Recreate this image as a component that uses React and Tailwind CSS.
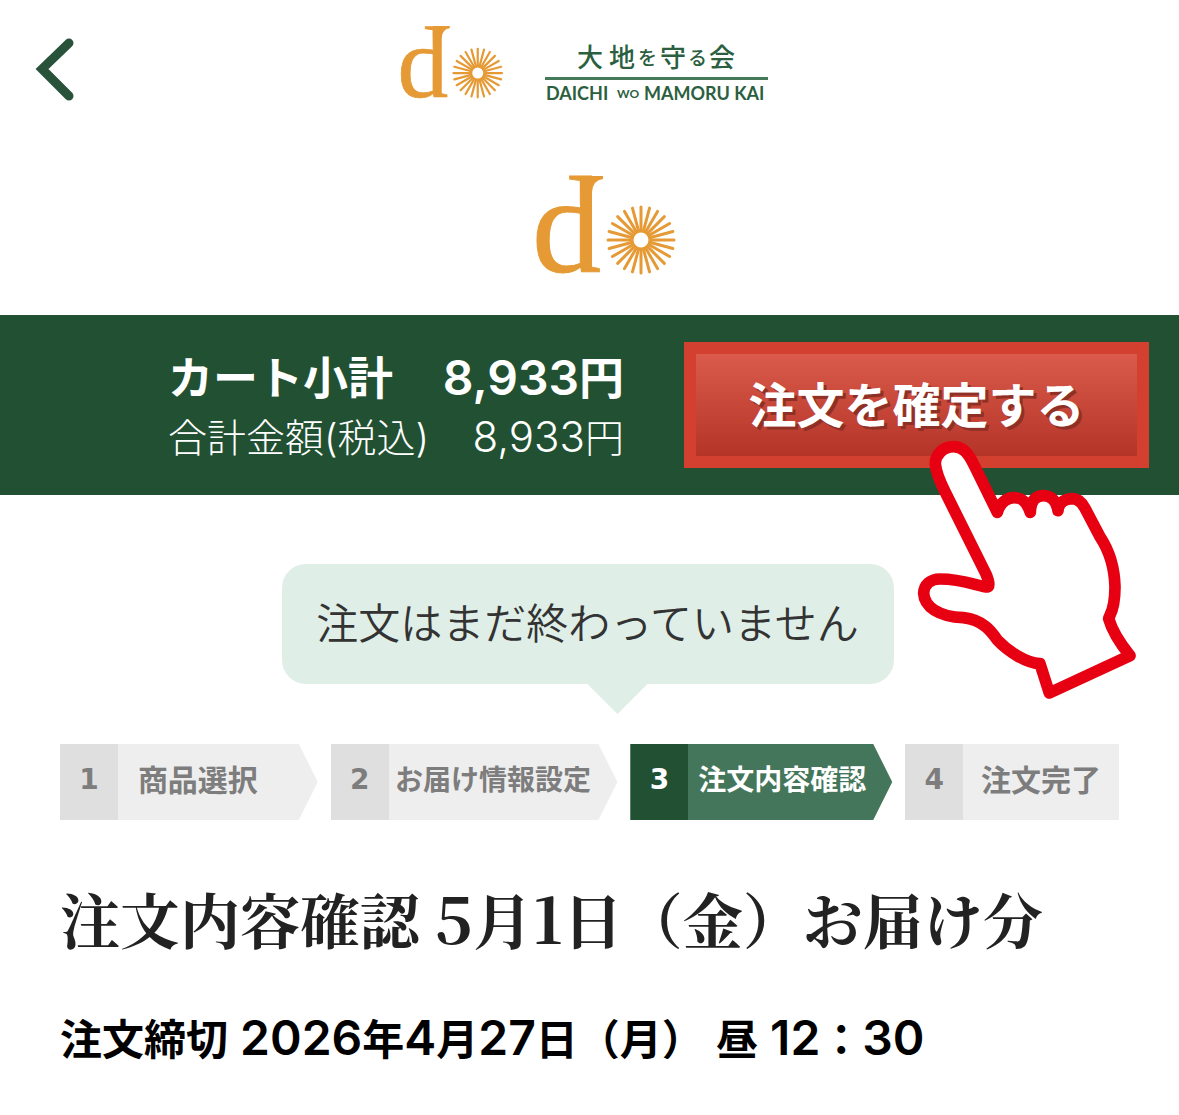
const sans = "font-['Inter','Noto_Sans_CJK_JP',sans-serif]";
const cjk = "font-['Noto_Sans_CJK_JP',sans-serif]";

const steps = [
  { no: 1, label: "商品選択", box: "flex-[258]", text: "text-[30px] pr-10" },
  { no: 2, label: "お届け情報設定", box: "flex-[287]", text: "text-[28px] pr-5" },
  { no: 3, label: "注文内容確認", box: "flex-[262]", text: "text-[28px] pr-4", active: true },
  { no: 4, label: "注文完了", box: "flex-[214]", text: "text-[30px]", last: true },
];

const rays = Array.from({ length: 24 }, (_, i) => i * 15);

const Num = ({ children }) => (
  <span className="text-[48px] font-semibold">{children}</span>
);

const DoLogo = ({ className }) => (
  <svg
    viewBox="0 0 144 102"
    className={`overflow-visible ${className}`}
    role="img"
    aria-label="do"
    fill="#e59a35"
  >
    <text
      x="-2"
      y="96"
      fontSize="138"
      stroke="#e59a35"
      strokeWidth="1"
      fontFamily="Liberation Serif, serif"
    >
      d
    </text>
    {/* top flourish of the stem */}
    <path d="M46 0H69V3Q59 4 58 16H46Z" />
    <g stroke="#e59a35" strokeWidth="3" strokeLinecap="round">
      {rays.map((deg) => (
        <line
          key={deg}
          x1="107"
          y1="56"
          x2="107"
          y2="31"
          transform={`rotate(${deg} 107 64)`}
        />
      ))}
    </g>
    <circle cx="107" cy="64" r="9" fill="#fff" stroke="#e59a35" strokeWidth="3" />
  </svg>
);

const DaichiLogo = () => (
  <svg
    viewBox="0 0 224 60"
    className="w-56 h-15 overflow-visible"
    role="img"
    aria-label="大地を守る会 DAICHI WO MAMORU KAI"
    fill="#2b5f3f"
  >
    <g fontFamily="Noto Sans CJK JP, sans-serif" fontWeight="500">
      <text y="25" fontSize="26">
        <tspan x="32">大</tspan>
        <tspan x="64">地</tspan>
        <tspan x="115">守</tspan>
        <tspan x="164">会</tspan>
      </text>
      <text y="23" fontSize="19">
        <tspan x="93">を</tspan>
        <tspan x="143">る</tspan>
      </text>
    </g>
    <rect x="0" y="35" width="223" height="3" fill="#44795a" />
    <g fontFamily="Lato, sans-serif" fontWeight="700">
      <text x="1" y="58" fontSize="18">DAICHI</text>
      <text x="72" y="56" fontSize="12">WO</text>
      <text x="99" y="58" fontSize="18">MAMORU KAI</text>
    </g>
  </svg>
);

const HandPointer = () => (
  <svg
    viewBox="0 0 780 840"
    className="absolute z-10 left-54 top-22 w-65 h-70 pointer-events-none"
    aria-hidden="true"
  >
    <path
      d="M292 247L222 105C203 65 187 50 160 50C130 50 105 75 106 102C108 125 120 155 135 185L258 432C269 458 268 470 262 471C240 471 190 447 120 447C90 447 72 465 71 490C73 530 115 560 190 563C250 570 275 605 292 630C325 665 380 700 420 701L448 789L690 677C660 640 637 605 626 566C627 555 645 545 645 470C643 400 620 350 600 320L555 235C543 212 530 206 516 206C490 207 475 222 474 242C470 215 455 197 431 197C408 197 392 210 391 247C380 215 365 203 343 203C318 203 300 220 292 247Z"
      fill="#fff"
      stroke="#e60012"
      strokeWidth="35"
      strokeLinejoin="round"
    />
  </svg>
);

const Step = ({ step }) => (
  <li
    aria-current={step.active ? "step" : undefined}
    className={`flex h-19 font-bold ${step.box} ${
      step.active ? "bg-[#44765b] text-white" : "bg-[#eeeeee] text-[#7d7d7d]"
    } ${
      step.last
        ? ""
        : "[clip-path:polygon(0_0,calc(100%-19px)_0,100%_50%,calc(100%-19px)_100%,0_100%)]"
    }`}
  >
    <span
      className={`w-[58px] shrink-0 flex items-center justify-center pb-1 text-[28px] font-['DejaVu_Sans',sans-serif] ${
        step.active ? "bg-[#215132]" : "bg-[#dfdfdf]"
      }`}
    >
      {step.no}
    </span>
    <span
      className={`flex-1 flex items-center justify-center pb-2 whitespace-nowrap ${step.text}`}
    >
      {step.label}
    </span>
  </li>
);

const App = () => {
  return (
    <div className={`min-h-screen bg-white text-[#333333] ${cjk}`}>
      <header className="relative flex items-start justify-center gap-10 h-[150px] pt-[26px] pr-3">
        <button type="button" aria-label="戻る" className="absolute left-8 top-8">
          <svg viewBox="0 0 48 76" className="w-12 h-19">
            <path
              d="M37 11L10 37L37 64"
              fill="none"
              stroke="#28533a"
              strokeWidth="9"
              strokeLinecap="round"
              strokeLinejoin="miter"
            />
          </svg>
        </button>
        <DoLogo className="w-[106px] h-[75px]" />
        <div className="pt-4">
          <DaichiLogo />
        </div>
      </header>

      <div className="flex justify-center h-[165px] pt-[26px] pl-8">
        <DoLogo className="w-36 h-[102px]" />
      </div>

      <section className="flex items-center justify-end gap-15 h-45 px-[30px] bg-[#215132] text-white">
        <dl className={`w-[456px] pt-1.5 ${sans}`}>
          <div className="flex justify-between items-baseline text-[45px] leading-[58px] font-bold">
            <dt>カート小計</dt>
            <dd>
              <Num>8,933</Num>円
            </dd>
          </div>
          <div className="flex justify-between items-baseline text-[39px] leading-[58px] font-light">
            <dt>合計金額(税込)</dt>
            <dd>
              <span className="text-[42px]">8,933</span>円
            </dd>
          </div>
        </dl>
        <div className="relative">
          <button
            type="button"
            className="w-[465px] h-[126px] pb-1.5 border-12 border-[#d4402f] bg-linear-to-b from-[#da5a4b] to-[#b43427] bg-origin-padding text-[48px] leading-none font-bold whitespace-nowrap [text-shadow:3px_3px_0_#8f3026]"
          >
            注文を確定する
          </button>
          <HandPointer />
        </div>
      </section>

      <main className="px-15 pt-[69px]">
        <div className="flex flex-col items-center pr-1">
          <p className="flex items-center justify-center w-[612px] h-30 pb-2 rounded-3xl bg-[#dfeee7] text-[42px] font-[350]">
            注文はまだ終わっていません
          </p>
          <div className="ml-15 w-15 h-[30px] bg-[#dfeee7] [clip-path:polygon(0_0,100%_0,50%_100%)]" />
        </div>

        <ol className="flex gap-[13px] mt-[30px]">
          {steps.map((step) => (
            <Step key={step.no} step={step} />
          ))}
        </ol>

        <h1 className="mt-14 text-[60px] leading-20 font-bold text-[#222222] whitespace-nowrap font-['Noto_Serif_CJK_JP','Liberation_Serif','Noto_Sans_CJK_JP',serif]">
          注文内容確認 <span className="text-[64px]">5</span>月
          <span className="text-[64px]">1</span>日（金）お届け分
        </h1>
        <p className={`mt-12 text-[42px] leading-16 font-bold text-black whitespace-nowrap ${sans}`}>
          注文締切<Num> 2026</Num>年<Num>4</Num>月<Num>27</Num>日（月）
          <Num> </Num>昼<Num> 12</Num>：<Num>30</Num>
        </p>
      </main>
    </div>
  );
};

export default App;
